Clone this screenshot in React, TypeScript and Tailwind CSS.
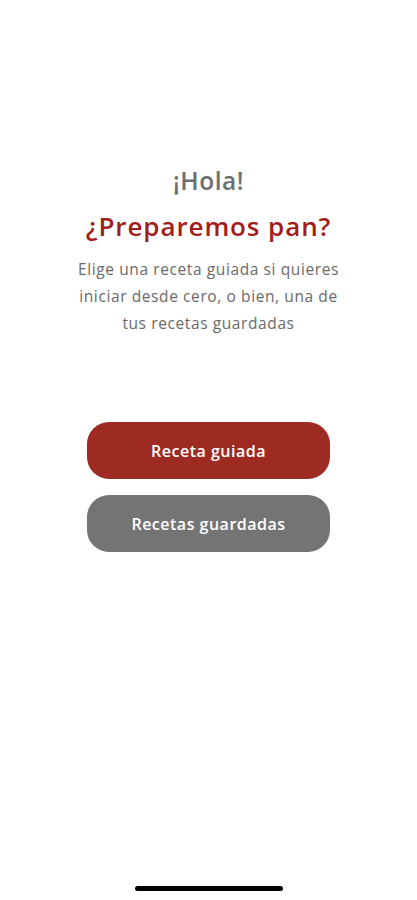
import React from "react";

const App: React.FC = () => {
  return (
    <div
      className="relative w-[417px] h-[900px] bg-white flex flex-col items-center"
      style={{ fontFamily: "'Open Sans', Lato, sans-serif" }}
    >
      {/* Greeting */}
      <div className="pt-[165px] flex flex-col items-center text-center">
        <h1 className="text-[24.5px] leading-[32px] font-semibold text-[#6e6e6e] tracking-[0.5px]">¡Hola!</h1>
        <h2 className="mt-[12px] text-[26px] leading-[34px] font-semibold text-[#a11d1a] tracking-[0.9px]">
          ¿Preparemos pan?
        </h2>
        <p className="mt-[13px] text-[15.5px] leading-[27px] text-[#6a6a6a] tracking-[0.6px]">
          Elige una receta guiada si quieres
          <br />
          iniciar desde cero, o bien, una de
          <br />
          tus recetas guardadas
        </p>
      </div>

      {/* Actions */}
      <div className="mt-[85px] flex flex-col gap-[16px]">
        <button className="w-[243px] h-[57px] rounded-[22px] bg-[#9d2b22] text-white text-[16px] font-semibold tracking-[0.5px]">
          Receta guiada
        </button>
        <button className="w-[243px] h-[57px] rounded-[22px] bg-[#747474] text-white text-[16px] font-semibold tracking-[0.5px]">
          Recetas guardadas
        </button>
      </div>

      {/* Home indicator */}
      <div className="absolute bottom-[9px] left-[135px] w-[148px] h-[5px] rounded-full bg-black" />
    </div>
  );
};

export default App;
